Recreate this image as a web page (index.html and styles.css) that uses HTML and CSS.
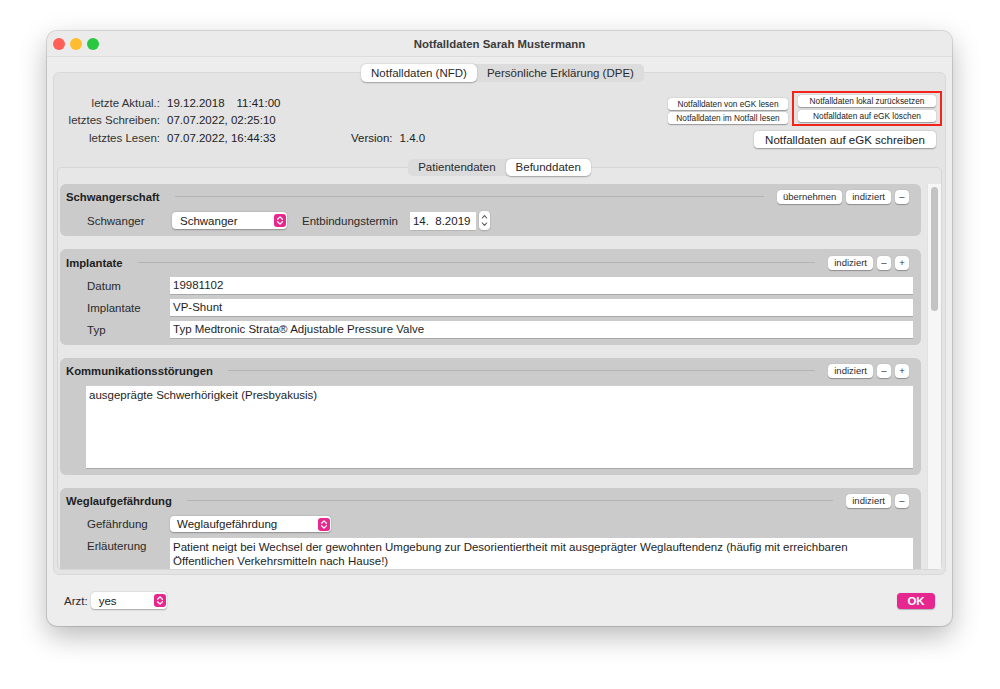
FILE: index.html
```html
<!DOCTYPE html>
<html lang="de">
<head>
<meta charset="utf-8">
<title>Notfalldaten Sarah Mustermann</title>
<link rel="stylesheet" href="styles.css">
</head>
<body>
<div class="window">
  <div class="titlebar">
    <div class="lights"><span class="light red"></span><span class="light yellow"></span><span class="light green"></span></div>
    <div class="title">Notfalldaten Sarah Mustermann</div>
    <div></div>
  </div>
  <div class="winbody">
    <div class="tabbox">
      <div class="seg seg-top"><span class="seg-item active">Notfalldaten (NFD)</span><span class="seg-item">Persönliche Erklärung (DPE)</span></div>
      <div class="info">
        <div class="info-grid">
          <span class="lbl">letzte Aktual.:</span><span class="val">19.12.2018<span class="time">11:41:00</span></span><span></span><span></span>
          <span class="lbl">letztes Schreiben:</span><span class="val">07.07.2022, 02:25:10</span><span></span><span></span>
          <span class="lbl">letztes Lesen:</span><span class="val">07.07.2022, 16:44:33</span><span class="val">Version:</span><span class="val">1.4.0</span>
        </div>
        <div class="actions">
          <div class="actions-row">
            <div class="btn-col">
              <button class="sbtn w120">Notfalldaten von eGK lesen</button>
              <button class="sbtn w120">Notfalldaten im Notfall lesen</button>
            </div>
            <div class="redbox">
              <button class="sbtn w138">Notfalldaten lokal zurücksetzen</button>
              <button class="sbtn w138">Notfalldaten auf eGK löschen</button>
            </div>
          </div>
          <button class="btn-big">Notfalldaten auf eGK schreiben</button>
        </div>
      </div>
      <div class="innerbox">
        <div class="seg seg-sub"><span class="seg-item">Patientendaten</span><span class="seg-item active">Befunddaten</span></div>
        <div class="scroll">
          <div class="content">
            <div class="section s1">
              <div class="sec-head">
                <span class="sec-title">Schwangerschaft</span><span class="sec-line"></span>
                <div class="sec-btns"><span class="hbtn">übernehmen</span><span class="hbtn">indiziert</span><span class="hbtn sq">–</span></div>
              </div>
              <div class="row1">
                <span class="lbl1">Schwanger</span>
                <span class="popup w115"><span class="ptext">Schwanger</span><span class="pink"><svg viewBox="0 0 12 13" width="12" height="13"><path d="M3.6 5.2 L6 2.9 L8.4 5.2 M3.6 7.8 L6 10.1 L8.4 7.8" fill="none" stroke="#fff" stroke-width="1.3" stroke-linecap="round" stroke-linejoin="round"/></svg></span></span>
                <span class="lbl2">Entbindungstermin</span>
                <span class="datefield">14.&nbsp;&nbsp;8.2019</span>
                <span class="stepper"><svg viewBox="0 0 11 19" width="11" height="19"><path d="M3.3 7 L5.5 4.6 L7.7 7 M3.3 12 L5.5 14.4 L7.7 12" fill="none" stroke="#555" stroke-width="1.1" stroke-linecap="round" stroke-linejoin="round"/></svg></span>
              </div>
            </div>
            <div class="section s2">
              <div class="sec-head">
                <span class="sec-title">Implantate</span><span class="sec-line"></span>
                <div class="sec-btns"><span class="hbtn">indiziert</span><span class="hbtn sq">–</span><span class="hbtn sq">+</span></div>
              </div>
              <div class="form">
                <span class="flbl">Datum</span><span class="field">19981102</span>
                <span class="flbl">Implantate</span><span class="field">VP-Shunt</span>
                <span class="flbl">Typ</span><span class="field">Typ Medtronic Strata® Adjustable Pressure Valve</span>
              </div>
            </div>
            <div class="section s3">
              <div class="sec-head">
                <span class="sec-title">Kommunikationsstörungen</span><span class="sec-line"></span>
                <div class="sec-btns"><span class="hbtn">indiziert</span><span class="hbtn sq">–</span><span class="hbtn sq">+</span></div>
              </div>
              <div class="textarea ta1">ausgeprägte Schwerhörigkeit (Presbyakusis)</div>
            </div>
            <div class="section s4">
              <div class="sec-head">
                <span class="sec-title">Weglaufgefährdung</span><span class="sec-line"></span>
                <div class="sec-btns"><span class="hbtn">indiziert</span><span class="hbtn sq">–</span></div>
              </div>
              <div class="form form4">
                <span class="flbl">Gefährdung</span>
                <span class="popup w161"><span class="ptext">Weglaufgefährdung</span><span class="pink"><svg viewBox="0 0 12 13" width="12" height="13"><path d="M3.6 5.2 L6 2.9 L8.4 5.2 M3.6 7.8 L6 10.1 L8.4 7.8" fill="none" stroke="#fff" stroke-width="1.3" stroke-linecap="round" stroke-linejoin="round"/></svg></span></span>
                <span class="flbl top">Erläuterung</span>
                <div class="textarea ta2">Patient neigt bei Wechsel der gewohnten Umgebung zur Desorientiertheit mit ausgeprägter Weglauftendenz (häufig mit erreichbaren Öffentlichen Verkehrsmitteln nach Hause!)</div>
              </div>
            </div>
          </div>
          <div class="scrollbar"><div class="thumb"></div></div>
        </div>
      </div>
    </div>
    <div class="bottombar">
      <span class="arzt">Arzt:</span>
      <span class="popup w76"><span class="ptext">yes</span><span class="pink"><svg viewBox="0 0 12 13" width="12" height="13"><path d="M3.6 5.2 L6 2.9 L8.4 5.2 M3.6 7.8 L6 10.1 L8.4 7.8" fill="none" stroke="#fff" stroke-width="1.3" stroke-linecap="round" stroke-linejoin="round"/></svg></span></span>
      <span class="spacer"></span>
      <button class="okbtn">OK</button>
    </div>
  </div>
</div>
</body>
</html>
```
FILE: styles.css
```css
* { box-sizing: border-box; }
html, body { margin: 0; }
body {
  padding: 31px 0 0 47px;
  background: #ffffff;
  font-family: "Liberation Sans", Arial, sans-serif;
  font-size: 11.5px;
  color: #262626;
  height: 689px;
  overflow: hidden;
}
button { font-family: "Liberation Sans", Arial, sans-serif; cursor: default; }

.window {
  width: 905px;
  height: 595px;
  background: #eeeded;
  border-radius: 10px;
  box-shadow: 0 0 0 1px rgba(0,0,0,0.13), 0 10px 28px rgba(0,0,0,0.28);
  display: flex;
  flex-direction: column;
  overflow: hidden;
}

.titlebar {
  flex: none;
  height: 26px;
  display: grid;
  grid-template-columns: 1fr auto 1fr;
  align-items: center;
  background: #ebebeb;
  border-bottom: 1px solid #dcdcdc;
}
.lights { display: flex; gap: 5px; padding-left: 6px; }
.light { width: 12px; height: 12px; border-radius: 50%; }
.red { background: #ff5f57; }
.yellow { background: #febc2e; }
.green { background: #28c840; }
.title { font-weight: bold; font-size: 11.4px; color: #3b3b3b; }

.winbody {
  flex: 1;
  min-height: 0;
  display: flex;
  flex-direction: column;
  padding: 15px 6px 0;
}

.tabbox {
  flex: 1;
  min-height: 0;
  background: #e4e4e4;
  border: 1px solid #d9d9d9;
  border-radius: 6px;
  display: flex;
  flex-direction: column;
  padding: 0 3px 4px;
}

.seg {
  align-self: center;
  display: flex;
  background: #dcdcdc;
  border-radius: 5px;
  height: 18px;
  flex: none;
}
.seg-top { margin-top: -9px; margin-left: 6px; }
.seg-sub { margin-top: -9px; height: 17px; }
.seg-item {
  padding: 0 10px;
  line-height: 18px;
  font-size: 11.5px;
  color: #2a2a2a;
  border-radius: 5px;
}
.seg-sub .seg-item { line-height: 17px; }
.seg-item.active { background: #ffffff; box-shadow: 0 0.5px 1.5px rgba(0,0,0,0.3); }

.info {
  flex: none;
  display: flex;
  justify-content: space-between;
  margin-top: 9px;
}
.info-grid {
  display: grid;
  grid-template-columns: 103px 177px auto auto;
  column-gap: 7px;
  grid-auto-rows: 17.5px;
  align-items: center;
  align-self: flex-start;
  padding-top: 3px;
}
.lbl { text-align: right; color: #333333; }
.val { color: #222222; }
.time { margin-left: 12px; }

.actions { display: flex; flex-direction: column; align-items: flex-end; }
.actions-row { display: flex; align-items: center; gap: 4px; }
.btn-col { display: flex; flex-direction: column; gap: 2px; margin-top: 4px; }
.redbox {
  width: 150px;
  height: 35px;
  border: 2px solid #f2241b;
  padding: 2px 4px;
  display: flex;
  flex-direction: column;
  justify-content: center;
  gap: 3px;
}
.sbtn {
  height: 12px;
  font-size: 8.3px;
  line-height: 12px;
  padding: 0;
  border: none;
  border-radius: 3px;
  background: #ffffff;
  color: #222222;
  box-shadow: 0 0.5px 1.2px rgba(0,0,0,0.35);
}
.w120 { width: 120px; }
.w138 { width: 138px; }
.btn-big {
  margin-top: 5px;
  margin-right: 6px;
  width: 182px;
  height: 17px;
  padding: 0;
  border: none;
  border-radius: 4px;
  background: #ffffff;
  font-size: 11.5px;
  color: #222222;
  box-shadow: 0 0.5px 1.5px rgba(0,0,0,0.35);
}

.innerbox {
  flex: 1;
  min-height: 0;
  margin-top: 19px;
  background: #e7e7e7;
  border: 1px solid #d6d6d6;
  border-radius: 5px;
  display: flex;
  flex-direction: column;
}
.scroll {
  flex: 1;
  min-height: 0;
  display: flex;
  margin-top: 8px;
  padding-left: 2px;
}
.content {
  flex: 1;
  min-width: 0;
  overflow: hidden;
  display: flex;
  flex-direction: column;
  gap: 13px;
}
.scrollbar {
  flex: none;
  width: 14px;
  margin-left: 6px;
  background: #f6f6f6;
  border-left: 1px solid #e2e2e2;
  padding: 3px 3px 0 3px;
}
.thumb { width: 7px; height: 124px; background: #c3c3c3; border-radius: 4px; }

.section {
  flex: none;
  background: #cbcbcb;
  border-radius: 6px;
  padding: 6px 8px 7px 6px;
}
.s1 { padding-bottom: 7px; }
.s2 { padding-top: 7px; }
.s4 { padding-bottom: 20px; }
.sec-head { display: flex; align-items: center; height: 14px; }
.sec-title { font-weight: bold; font-size: 11.3px; color: #1e1e1e; }
.sec-line { flex: 1; height: 1px; background: #b4b4b4; margin: -1px 13px 0 15px; }
.sec-btns { display: flex; gap: 4px; margin-right: 4px; }
.hbtn {
  height: 14px;
  line-height: 14px;
  font-size: 9.5px;
  padding: 0 6px;
  background: #ffffff;
  border-radius: 4px;
  color: #2b2b2b;
  box-shadow: 0 0.5px 1px rgba(0,0,0,0.3);
}
.hbtn.sq { width: 14px; padding: 0; text-align: center; }

.row1 { display: flex; align-items: center; margin-top: 8px; padding-left: 21px; height: 17px; }
.lbl1 { width: 85px; color: #2a2a2a; }
.lbl2 { margin-left: 15px; color: #2a2a2a; }

.popup {
  display: flex;
  align-items: center;
  justify-content: space-between;
  height: 17px;
  background: #ffffff;
  border-radius: 4px;
  box-shadow: 0 0.5px 1.5px rgba(0,0,0,0.3);
  padding: 0 1px 0 8px;
  color: #222222;
}
.w115 { width: 115px; }
.w161 { width: 161px; padding-left: 7px; height: 16px; }
.w76 { width: 76px; }
.pink { width: 12px; height: 13px; background: #e6278e; border-radius: 3px; display: flex; }

.datefield {
  margin-left: 12px;
  width: 66px;
  height: 18px;
  line-height: 18px;
  background: #ffffff;
  padding-left: 3px;
  color: #222222;
  box-shadow: 0 1px 0 #b5b5b5;
  flex: none;
}
.stepper {
  margin-left: 3px;
  width: 11px;
  height: 19px;
  background: #ffffff;
  border-radius: 4px;
  box-shadow: 0 0.5px 1.5px rgba(0,0,0,0.3);
  display: flex;
  flex: none;
}

.form {
  display: grid;
  grid-template-columns: 83px 1fr;
  row-gap: 5px;
  margin-top: 7px;
  padding-left: 21px;
  align-items: center;
}
.form4 { margin-top: 8px; row-gap: 6px; }
.flbl { color: #2a2a2a; }
.flbl.top { align-self: start; padding-top: 2px; }
.field {
  height: 17px;
  line-height: 17px;
  background: #ffffff;
  padding-left: 3px;
  color: #1e1e1e;
  box-shadow: 0 1px 0 #a9a9a9;
}
.textarea {
  background: #ffffff;
  color: #1e1e1e;
  padding: 2px 3px;
  line-height: 14px;
  box-shadow: 0 1px 0 #a9a9a9;
}
.ta1 { margin: 8px 0 0 20px; height: 82px; }
.ta2 { height: 50px; padding-right: 40px; }

.bottombar {
  flex: none;
  height: 51px;
  display: flex;
  align-items: center;
  padding: 0 11px 0 11px;
}
.arzt { margin-right: 3px; color: #2a2a2a; }
.spacer { flex: 1; }
.okbtn {
  width: 38px;
  height: 16px;
  padding: 0;
  border: none;
  border-radius: 4px;
  background: #e6278f;
  color: #ffffff;
  font-size: 11.5px;
  font-weight: bold;
  box-shadow: 0 0.5px 1px rgba(0,0,0,0.25);
}
```
